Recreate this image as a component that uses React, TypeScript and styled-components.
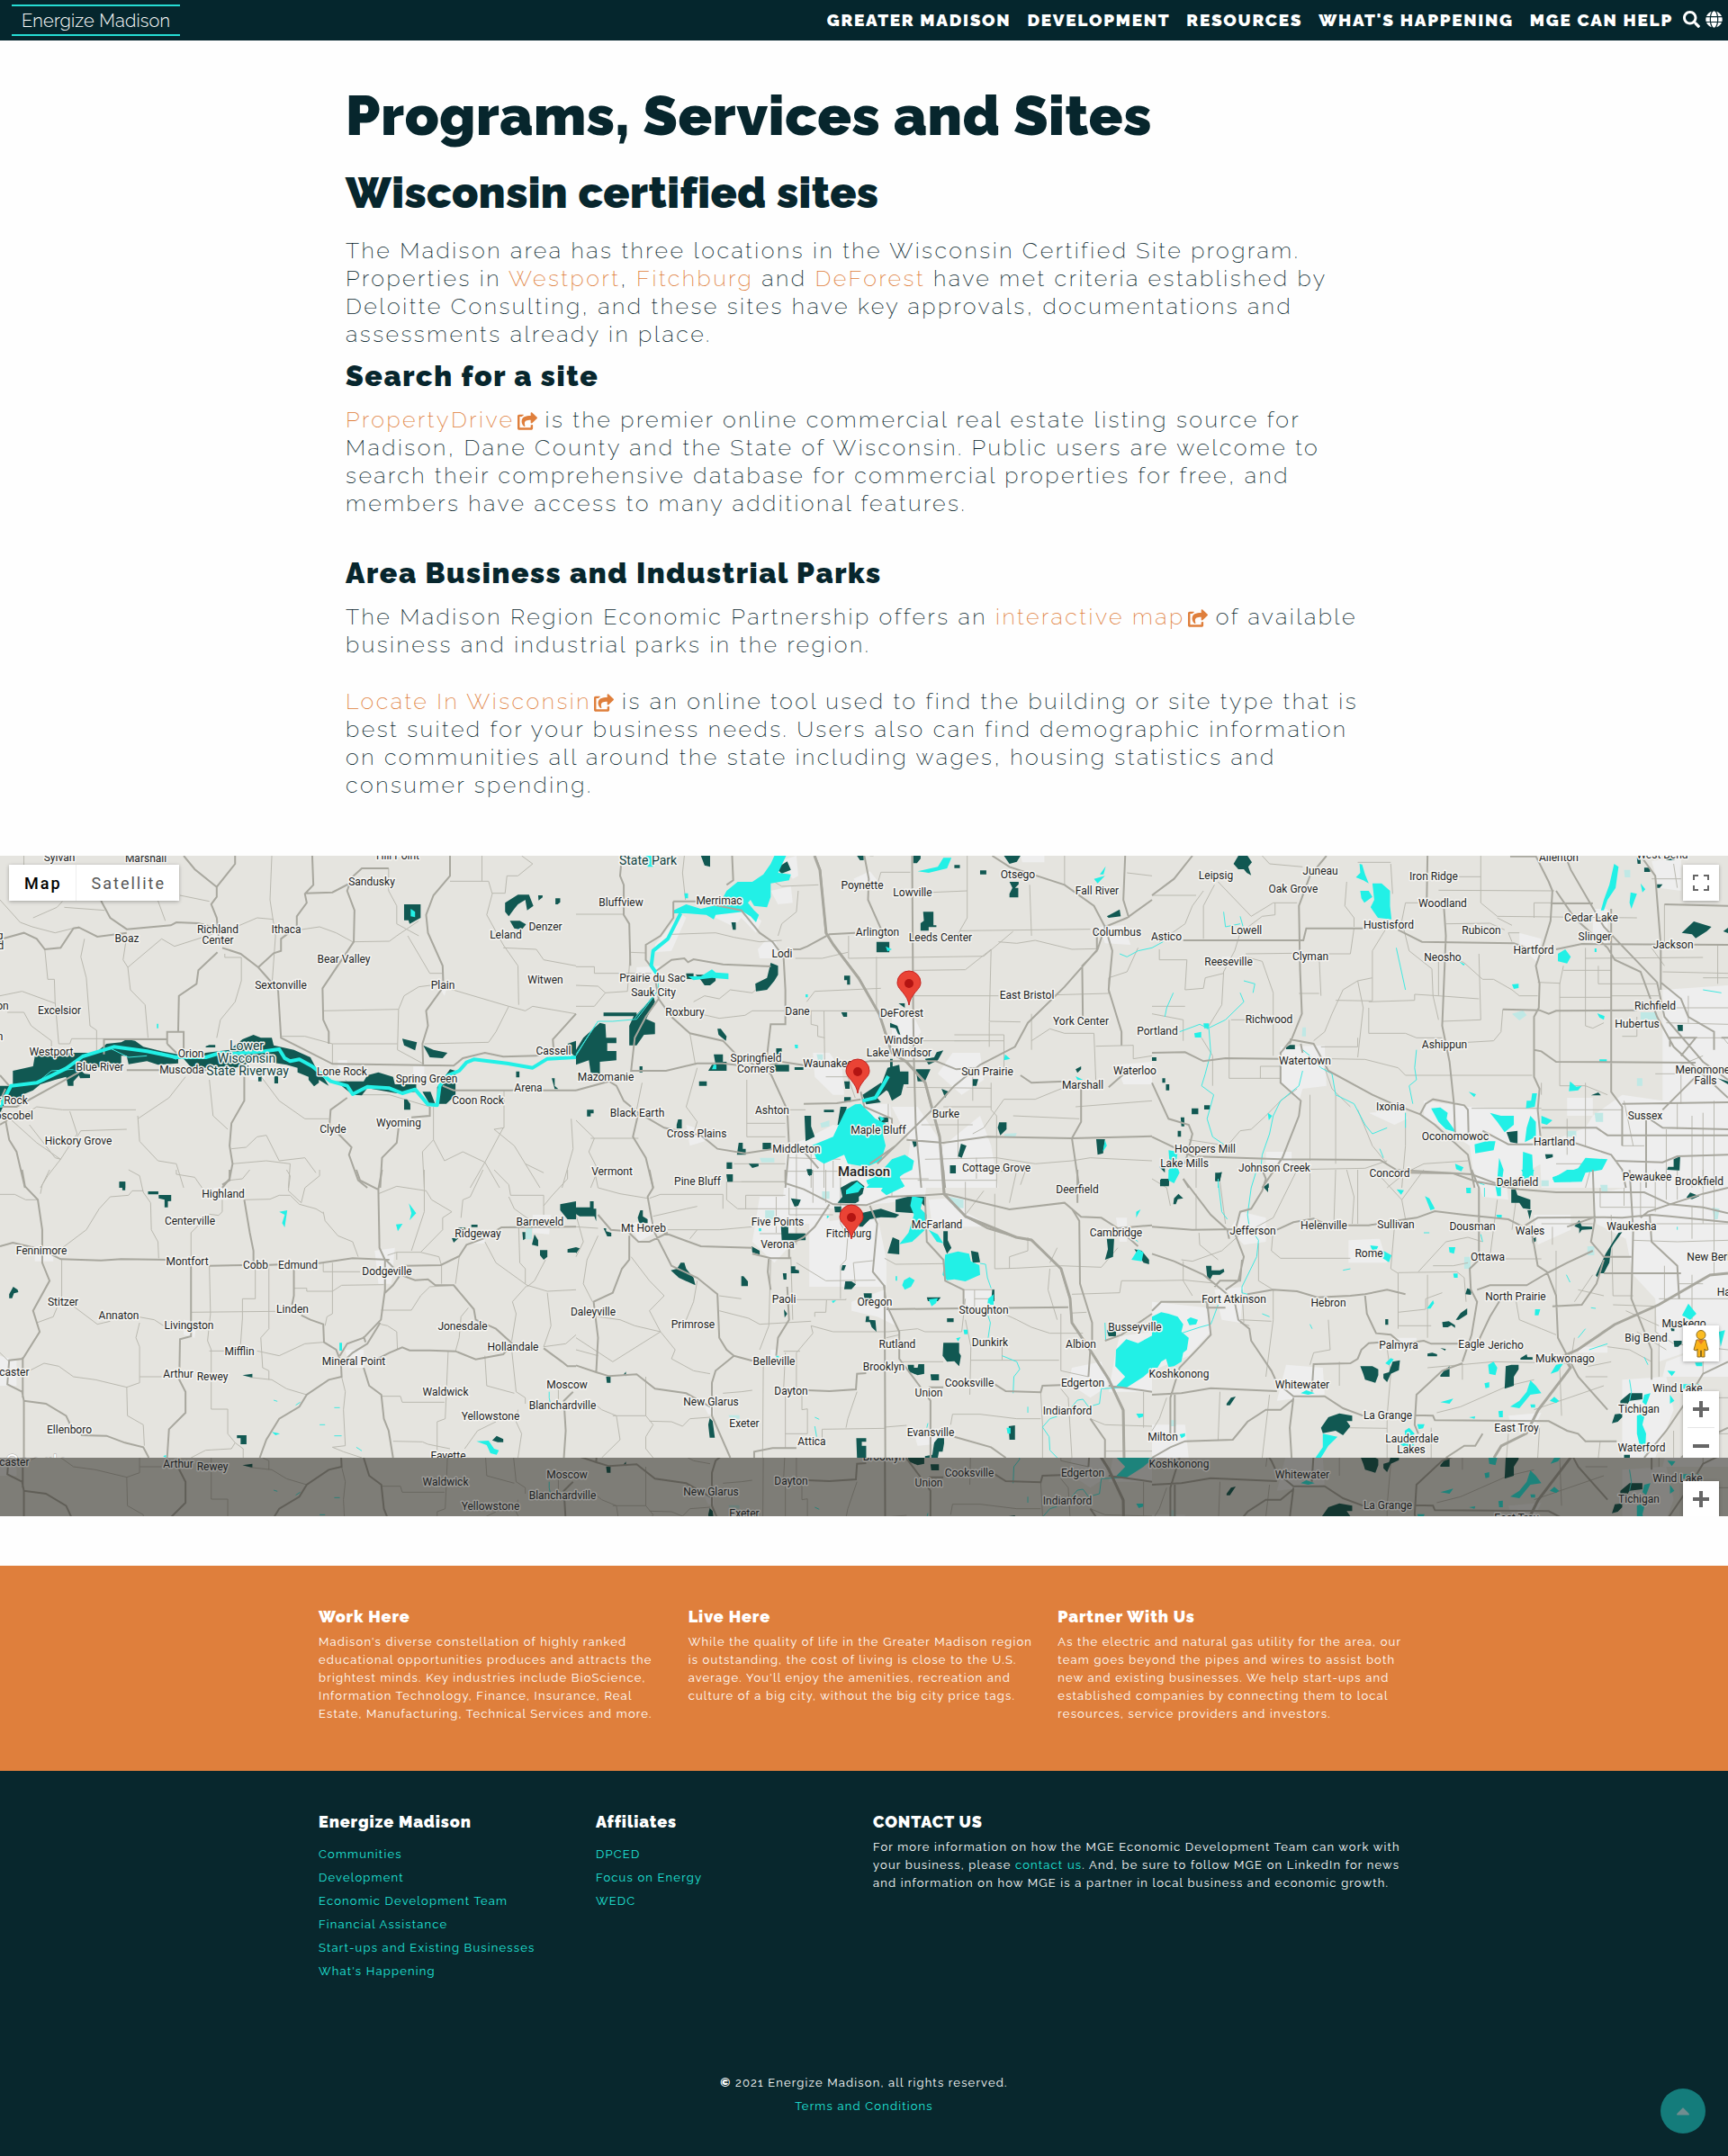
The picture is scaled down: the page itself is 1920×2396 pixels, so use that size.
import React from "react";
import styled, { createGlobalStyle } from "styled-components";
import { FaSearch, FaGlobe, FaShareSquare, FaCaretUp } from "react-icons/fa";

const ink = "#07262d";
const orange = "#df7f3c";
const aqua = "#20e8dc";

const GlobalStyle = createGlobalStyle`
  *, *::before, *::after { box-sizing: border-box; }
  body {
    margin: 0;
    background: #fefefe;
    color: ${ink};
    font-family: Raleway, Lato, "Open Sans", sans-serif;
  }
  h1, h2, h3, p, ul { margin: 0; padding: 0; }
  ul { list-style: none; }
  a { text-decoration: none; }
  button { border: 0; padding: 0; cursor: pointer; }
`;

/* ---------- header ---------- */

const Header = styled.header`
  display: flex;
  justify-content: space-between;
  align-items: center;
  height: 45px;
  padding: 0 6px 0 13px;
  background: #05262d;
`;

const Brand = styled.a`
  display: flex;
  align-items: center;
  height: 35px;
  padding: 0 11px;
  border-top: 2px solid #26ddd4;
  border-bottom: 2px solid #26ddd4;
  color: #fff;
  font-size: 20px;
  font-weight: 300;
  letter-spacing: 0.01em;
`;

const Nav = styled.nav`
  display: flex;
  align-items: center;
  gap: 18px;
  padding-bottom: 2px;
`;

const NavLink = styled.a`
  color: #fff;
  font-size: 19px;
  font-weight: 900;
  letter-spacing: 0.09em;
  line-height: 24px;
  text-transform: uppercase;
`;

const NavTools = styled.div`
  display: flex;
  gap: 6px;
  margin-left: -7px;
`;

const IconButton = styled.button`
  display: flex;
  background: none;
  color: #fff;
  font-size: 19px;
`;

/* ---------- article ---------- */

const Article = styled.main`
  width: 60%;
  margin: 0 auto;
  padding: 47px 0 63px;
`;

const PageTitle = styled.h1`
  font-size: 62px;
  font-weight: 900;
  line-height: 74px;
  letter-spacing: 0.01em;
`;

const SectionTitle = styled.h2`
  margin-top: 19px;
  font-size: 48px;
  font-weight: 900;
  line-height: 58px;
  letter-spacing: 0.01em;
`;

const SubTitle = styled.h3<{ $gap: number }>`
  margin-top: ${(p) => p.$gap}px;
  font-size: 32px;
  font-weight: 900;
  line-height: 38px;
  letter-spacing: 0.05em;
`;

const Paragraph = styled.p<{ $gap: number }>`
  margin-top: ${(p) => p.$gap}px;
  font-size: 25px;
  font-weight: 200;
  line-height: 31px;
  letter-spacing: 0.1em;
`;

const TextLink = styled.a`
  color: ${orange};
  svg {
    width: 22px;
    height: 20px;
    margin: 0 0 0 3px;
    vertical-align: -3px;
  }
`;

/* ---------- map ---------- */

const MapFrame = styled.section<{ $height: number }>`
  position: relative;
  height: ${(p) => p.$height}px;
  overflow: hidden;
  background: #e5e4df;
`;

const MapArt = styled.svg`
  display: block;
  width: 100%;
  height: 100%;
  font-family: Roboto, sans-serif;
  path { vector-effect: non-scaling-stroke; }
`;

const TypeSwitch = styled.div`
  position: absolute;
  top: 10px;
  left: 10px;
  display: flex;
  background: #fff;
  box-shadow: 0 1px 4px rgba(0, 0, 0, 0.3);
`;

const TypeButton = styled.button<{ $active?: boolean }>`
  height: 40px;
  padding: 0 15px 0 17px;
  background: #fff;
  border-left: ${(p) => (p.$active ? "0" : "1px solid #eee")};
  color: ${(p) => (p.$active ? "#000" : "#565656")};
  font-family: Roboto, sans-serif;
  font-size: 18px;
  font-weight: ${(p) => (p.$active ? 500 : 400)};
  letter-spacing: 2px;
`;

const ControlStack = styled.div<{ $top: number }>`
  position: absolute;
  top: ${(p) => p.$top}px;
  right: 10px;
  display: flex;
  flex-direction: column;
  width: 40px;
  background: #fff;
  box-shadow: 0 1px 4px rgba(0, 0, 0, 0.3);
`;

const ControlButton = styled.button`
  display: flex;
  align-items: center;
  justify-content: center;
  height: 40px;
  background: #fff;
`;

const ControlRule = styled.div`
  height: 1px;
  margin: 0 5px;
  background: #e6e6e6;
`;

/* ---------- bands below the map ---------- */

const Band = styled.section`
  margin-top: 55px;
  padding: 46px 0 53px;
  background: ${orange};
  color: #fff;
`;

const Columns = styled.div<{ $template: string }>`
  display: grid;
  grid-template-columns: ${(p) => p.$template};
  max-width: 1232px;
  margin: 0 auto;
`;

const Column = styled.div`
  padding: 0 10px;
`;

const ColumnTitle = styled.h3`
  font-size: 18px;
  font-weight: 900;
  line-height: 22px;
  letter-spacing: 0.05em;
  margin-bottom: 7px;
`;

const SmallText = styled.p`
  font-size: 13px;
  line-height: 20px;
  letter-spacing: 0.09em;
`;

const Footer = styled.footer`
  padding: 46px 0 42px;
  background: #08272d;
  color: #fff;
`;

const FooterList = styled.ul`
  padding-top: 5px;
`;

const FooterItem = styled.li`
  font-size: 13px;
  line-height: 26px;
  letter-spacing: 0.09em;
`;

const FooterLink = styled.a`
  color: ${aqua};
`;

const Legal = styled.div`
  margin-top: 98px;
  text-align: center;
  font-size: 13px;
  line-height: 26px;
  letter-spacing: 0.09em;
`;

const LegalMark = styled.span`
  font-weight: 900;
`;

const BackToTop = styled.button`
  position: fixed;
  right: 25px;
  bottom: 25px;
  display: flex;
  align-items: center;
  justify-content: center;
  width: 50px;
  height: 50px;
  border-radius: 50%;
  background: #147c7b;
  color: #708d90;
  font-size: 24px;
`;

/* ---------- map data ---------- */

type Tile = {
  x: number;
  y: number;
  urban: string;
  pale: string;
  minor: string;
  major: string;
  parks: string;
  lakes: string;
  river: string;
  stream: string;
};

const tiles: Tile[] = [
  {
    x: 0,
    y: 940,
    urban: "M570 290h45v40h-45zM1190 460h30l-10 40zM920 715h25v40h-25zM1125 735h30v40h-30zM680 740h40v40h-40zM230 690h40v40l-30 10z",
    pale: "",
    minor:
      "M65 33V70M0 180L55 255 88 270M90 240L155 205 170 185M88 270L150 290 215 270M175 205L285 215M430 183L450 250M740 33L735 180 750 300 740 470M490 165L570 185M605 290L700 240 745 245M815 280L870 270 915 290 960 320 1060 318 1080 300 1140 250M1058 75V150L1080 200V260L1140 300M1225 118H1330L1340 160 1325 230 1370 330 1410 400 1412 530M1312 33V118M1420 33L1450 60 1410 100 1380 100 1375 158H1340M230 310L220 370 235 440 245 600 263 615V690M345 300L335 380 348 405 355 480 395 530 403 640M348 405L440 310 475 335 590 290M122 345L130 445H148L150 520 160 660H190L195 643M0 500L60 485 150 525M20 555H65L85 600 140 650V670M880 550L1085 545 1082 680 1150 725M765 635L830 635 905 660H1082M905 660V727M1205 470L1385 535 1430 550 1450 535 1568 560M1385 535L1350 620 1330 655 1155 660M1205 425H1170L1110 300M1568 400L1480 380 1460 345 1370 340M1085 545L1100 500 1140 470 1205 460M195 643H455M612 360V372H657V450L640 520 600 580 590 640M1372 815V940L1345 945 1400 1000 1430 1060 1470 1140M860 1090L830 1040 760 1050 725 965 700 970 670 1005 630 1010M370 880H170L100 870 60 900M375 900L380 985 430 1050 480 1060 500 1140M375 910L460 840 505 770M190 885L210 960 165 1045 130 1100 110 1140M80 930L150 1040 165 1045M705 760L760 850 830 910H895M345 945L220 950 200 990M1180 870V980L1150 1020 1155 1140M1180 980L1210 1050 1260 1020 1320 1055 1360 1140M1320 1055L1370 940M1320 1055L1280 1140M940 780L980 830 1060 830 1170 870M570 780L580 900 620 945M1555 910L1560 1010 1530 1140M633 1060L725 1050 790 1060 785 1140M1430 1060L1480 1090M0 880L100 990 165 1045",
    major:
      "M640 33V60L590 137V170L575 195 590 240 595 300M500 33L530 78 590 137M850 33L853 130 830 160 835 190 808 235V270L765 310V350L745 358 703 405M830 158L905 155 960 120M1058 75H985L958 105 945 150 965 215 963 320 878 475 880 580 895 620V660M1225 33V100L1180 165 1160 230 1165 290 1205 400 1207 470 1160 550 1165 600 1150 660 1152 735M0 312L65 290 100 310 122 345 165 340 200 275 215 272 265 303 345 290M275 183L300 240 345 278 465 265 480 255 540 258 592 275M592 355L540 415 535 460 487 500 485 620M605 340L655 360 703 405 757 480 765 640 905 727 1235 733 1260 708 1320 690 1370 703 1460 700 1510 680M1568 560L1505 645 1507 680M0 870H45L215 755M345 748H590M665 770V850L630 925 625 1000 633 1060 625 1110 605 1140M945 840L900 880 897 930 957 1005 950 1030 975 1115 1000 1140M1205 800L1235 815H1568M1170 870V900L1120 905M1085 940L1080 990 1040 1040 1035 1140M15 915L25 980 45 1020 68 1140M0 765L25 800M15 810L0 850M455 660V620H500V710M455 660L480 690M455 645H283V695M0 930L20 915",
    parks:
      "M35 750L90 735 95 700 200 690 260 690 290 660 330 655 345 645 368 650 390 670 440 685 485 695V725L430 730 400 718 350 728 345 700 330 700 330 730 300 728 280 738 210 738 230 760 245 762 245 774 218 775 215 765 200 785V800H185L180 770 150 780 110 795 90 815 60 830 60 842 20 842 0 890V800H35ZM500 710L560 690 625 680 660 645 690 630 710 640 740 640 745 665 800 680 845 705 860 740 880 770 895 800 868 780V790L855 802 840 780 840 770 810 755V740L780 730 700 715 640 740 620 735 560 740 520 738ZM703 770H712V785H703ZM747 768H757V792H747ZM915 785H990L1000 765 1030 755 1070 770 1075 795H1133V820L1080 825 1000 808 985 832 960 830ZM1150 820H1172L1185 862H1170ZM1190 805L1225 745 1240 750 1240 830 1215 860H1190ZM1100 195H1145V240L1115 260 1112 248H1100ZM1375 190L1410 163H1440L1452 200 1435 215 1430 180 1410 195 1400 210 1385 235 1375 220ZM1388 250L1415 250 1432 262 1420 280 1400 275ZM1465 165H1477V172L1466 182ZM1512 175H1525V188L1518 195H1512ZM1095 643L1135 655 1130 682 1100 665ZM1152 665L1180 680 1218 690 1205 708 1170 705ZM1100 845H1108L1117 860V880H1100ZM1405 752H1414V772H1405ZM1502 775H1510V800L1520 811H1510ZM1545 660L1568 650V705L1545 680ZM325 1120H341V1140H325ZM560 668L570 664H586V672H560Z",
    lakes: "M1118 210L1130 220 1130 238 1118 235ZM427 593H431V608H427Z",
    river:
      "M0 870L30 800 100 790 180 742 225 702 270 685 310 670 400 685 480 705 560 705 600 690 640 692 720 685 760 678 775 708 790 718 815 712 850 735 900 785 945 800 960 828 1000 803 1060 808 1095 825 1130 812 1165 862 1190 865 1197 800 1220 765 1250 750 1270 722 1290 712 1380 725 1450 740 1490 710 1568 705",
    stream: "M100 790L140 750 200 745M300 675L350 705 400 700M440 690L480 712",
  },
  {
    x: 640,
    y: 940,
    urban:
      "M530 150L585 135 590 190 550 195ZM380 215L450 205 505 250 490 290 450 240 430 270 380 240ZM215 330L285 225 300 240 260 350 215 355ZM165 405L230 400 215 440 165 425ZM495 345L520 310 545 320 555 375H500ZM755 110L800 85 820 115 790 150ZM555 50L600 33 605 100 590 110ZM645 690L690 690 725 750 730 830 700 830 650 770ZM620 980L700 930 730 940 750 1050 740 1140H570V1000ZM860 870L910 990 900 1070 920 1140H1150L1130 1000 1100 900 1000 1000 930 870ZM1025 690L1100 690 1110 780 1050 830 985 760ZM860 550L920 570 940 620 900 680 860 660ZM1470 730L1568 720V795H1490ZM1425 270L1490 265 1510 330 1440 325ZM780 860L855 860 860 940 800 900ZM1210 33H1275V55H1215ZM300 930L350 950 350 985 310 1000Z",
    pale: "M500 1040H540V1055H505ZM1165 960L1200 958 1195 972H1168ZM655 695H672V720H660ZM665 925L690 915 690 935 668 940Z",
    minor:
      "M295 33L290 90 298 180M0 228H130M148 355L190 357M0 403H50V425L205 425M0 535H50L80 490 140 485 148 355M0 465L60 468 80 490M660 130L560 135 540 120M605 150L600 220 560 260 550 300M260 295L380 290 430 305 500 320 560 315M597 375H670L740 355M742 300V375L1110 368 1190 285M1040 300L1045 283 1400 278M920 415L1060 413 1130 345 1125 585 1210 587M390 575L460 565 480 550H830M390 575L300 550M628 520L650 485 830 475M675 550L677 720M640 550V595L658 600V635L677 640M818 370V550M920 500H1150M1300 497L1450 492 1450 440 1500 420 1530 340M1150 320L1200 325 1250 315 1350 345 1418 343M1125 587V670M1030 630H1165V760M1030 650H1165M920 650H1100M970 155L1065 150V33M1065 150V240L1045 283M1235 130L1240 300M1240 680V560M1240 650L1290 610 1330 625H1410L1415 780M1415 668L1517 665V710L1568 700M820 130L830 88H910M320 520L350 500 390 510 420 480 480 490 535 430M310 625L325 730M575 880H625M465 780V970H570M465 925H570M180 790L165 880M330 740L300 870 330 920 320 960M0 915L50 975 35 1020 60 1080 40 1140M40 975H170M1130 790V880L1145 900V1140M900 805L1130 808M1080 770V850M1375 810L1330 805 1250 845H1165L1110 940 1080 960M950 1045L1145 1040 1250 1060 1350 1050 1400 1040 1568 1050M1230 1060L1210 1130M930 1115H1145M1090 1040V1110M430 1060H570M450 1120H570M600 1000V1140M640 1010V1140M580 1040L720 1045M570 1085H720M700 1050V1140M675 1000V1140M1040 900V1040M1000 870H1130M940 930H1080M1360 870L1568 850M1190 900L1370 910M1330 33V130M1500 90L1568 100M850 860V960M680 770H740L760 840M800 33L810 33",
    major:
      "M650 33L665 80 680 290 700 330 770 440 825 560 860 690 900 720 950 790 990 970 1005 1140M785 33L797 110 795 180 835 290M915 33L918 560 920 720M425 33L428 115 410 130M125 33L120 100 130 130V230L145 260 148 400M265 185H330L450 215 500 290 535 320 565 370 570 480V595H530L520 700M1568 180L1500 240 1440 270 1420 345 1330 470 1230 590 1195 670 1100 730 1030 800 970 880 820 1060M1133 33L1180 70 1330 130 1410 200 1440 270M1495 33L1490 180 1505 240M1440 270L1460 350 1450 480 1485 620V665M1418 280V350L1378 400 1380 600M215 420L260 380 295 375 305 388 320 378 400 395 530 402M215 420L190 380V330L230 300 265 240V185M225 510L260 570 310 625 400 650 440 700 530 760 575 880 580 1000 570 1140M215 440L225 510 190 570 160 640 150 750H245L330 725H400L500 740 560 720 640 735 720 735 800 718H980L1035 745 1090 740M0 815L90 785 110 800 130 850 170 890 240 940 340 965 385 1010 460 1025 540 1010M170 890L155 970 190 1040 210 1140M900 980L1000 990 1120 970 1350 975 1568 968M620 860L710 858 775 845M775 820L785 870 860 910V960M1375 800V920L1350 975 1370 1140M1210 765L1240 790 1330 785M590 345H610L630 335 690 295 760 290M920 720L925 940 940 1140M600 990L660 1075M800 1060L870 1000M1450 805L1510 740",
    parks:
      "M340 33H365V70L350 65ZM545 75L575 52 585 80 560 92ZM765 33H783V48H773ZM1165 33H1210L1200 53 1180 60ZM1180 120H1205V128L1195 140H1204V172H1180V160L1188 140ZM918 33H938V43L928 58H918ZM1100 82H1117V95H1100ZM1030 64H1045V74H1030ZM945 220H973V265H981V271H960V283H938V258L947 250ZM818 320H853V355H818ZM530 390L550 400V430L540 450 520 480 490 485 488 460 520 440ZM730 433H746V463H738V448H730ZM300 425H320V445L300 443ZM325 430H380V450L365 465 350 465 340 448ZM423 255H435V280H427ZM1445 235L1480 212 1483 235 1450 240ZM160 560L215 590V628L185 630 165 665H145V600ZM75 556H165V568H75ZM160 570L190 530 210 500 215 520 190 580ZM20 640L65 590 80 595 82 640H110V658H85V684H110V715L65 720V765L40 755 35 715 0 730V680ZM385 610H394L410 635 408 650 388 630ZM375 695H400V720H410V750H360L370 730H380ZM540 730H580V752H540ZM545 675H560V695H545ZM595 738H619V747H595ZM173 735H181V755H173ZM335 785H356V800H335ZM30 880H48V892H40V902H30ZM278 912H288V942H274V930ZM722 555H738V570H728ZM878 525H895V540ZM855 590L875 600 883 630 877 628 870 608 855 605ZM848 740L880 730 882 752H905V795H892L885 830 860 850 850 820 830 800ZM780 830L830 790 850 810 820 840 830 855 790 862ZM925 745H965L950 785H930ZM950 710L975 705 982 688 1000 682 985 715 960 730ZM995 810L1015 820 1005 840ZM1080 778H1095L1090 800H1080ZM730 785H745V810H733ZM730 838H748V853H730ZM720 870H737L733 900 725 930H712ZM622 900H640V935L650 970 625 985ZM675 880H702V888H675ZM822 905H850V920L830 925ZM443 990H454V1010H462V1030H438ZM508 990H531V1012H508ZM470 1060H497V1068L480 1074ZM410 1055H425V1077H410ZM410 1095H427V1118H412ZM628 1078H642V1098H632ZM1152 922H1172V945L1155 965 1148 940ZM1048 993L1063 1000 1050 1040 1040 1035ZM1416 978H1440L1435 1025 1420 1030ZM915 985H930V998L920 1005ZM1360 745L1375 735 1375 745 1365 757ZM1018 1065H1034V1092H1018ZM855 710H862V740H855Z",
    lakes:
      "M540 33H572L550 90 585 95 580 115 530 125V170L520 205 485 200 475 180 468 190 485 215 498 230 490 255 475 235 455 220 380 230 375 245 355 230 300 225 265 225V215L300 195 340 210 390 195 410 150 440 120 480 120 510 95 530 60ZM305 435L340 435 370 412 380 422 415 425V445L370 440 320 448ZM930 85L985 70 1000 40 1022 40 1010 75 960 90ZM1410 110L1440 100 1420 125ZM1426 95L1442 68 1436 95ZM640 1000L700 970 715 930 735 880 760 862 775 860 800 890 815 910 850 930 835 960 843 1000 830 1050 790 1070 740 1060 730 1030 675 1060 655 1045ZM860 1045L895 1030 920 1050 915 1080 880 1100 890 1140H790L820 1100ZM750 1140L765 1120 785 1140ZM1168 695L1182 710 1165 715ZM1360 768L1380 780H1365ZM1440 980L1445 1000 1434 1020ZM625 495H631V505H625ZM595 663H604V675H597ZM295 158H305V175H297ZM843 335L860 345 848 352ZM190 33H210V70H195ZM375 730H382V745H370ZM825 900L840 910 830 920Z",
    river: "M285 225L250 310 210 350 205 400 222 430M780 850L815 840 835 800 850 768",
    stream: "M222 430L225 480 195 530 165 578 100 585 60 585 35 630 0 700M225 480L160 575M60 585L0 695M1480 360L1500 370 1530 350 1568 340",
  },
  {
    x: 1280,
    y: 940,
    urban:
      "M1390 480L1568 465V1140H1060L1055 1000 1180 940 1200 900 1280 830 1390 850ZM350 670L470 665 475 800 410 810 400 850 350 790ZM740 850L860 870 1050 880 1060 1060 940 1140H880L865 1000 740 900ZM590 890L690 880 695 910 660 930ZM1000 290L1060 310 1050 390 1000 330ZM1360 50L1440 40V150L1380 140ZM1130 840H1200V900H1130ZM190 370H220V400H190ZM1200 210H1240V330H1200ZM310 1020H380V1060H310Z",
    pale: "M980 560L1010 548 1020 565 1000 582ZM1330 555H1375V580H1330ZM1205 890H1228V920H1208ZM410 605H419V635H408ZM1285 80H1302V105H1287ZM1320 775H1335V800H1320ZM1130 950H1155V970H1130Z",
    minor:
      "M300 33L320 60 410 70M0 165H120M170 130L140 200V310M140 150L110 200 90 260 20 320M180 120L270 235 330 190H395M335 230V190M335 230L300 235 240 290 225 350 195 420 190 530 150 610M255 360L390 358M475 360H540L550 275M400 492H455M455 370L460 500M530 120L525 200 550 240V270M725 190H690L680 250 700 350 762 410 765 500 780 580M560 55H650M650 60L655 160M780 148L1095 150M830 103H895M895 33V190L940 235 1320 240M940 240L980 265M800 260L920 258 960 280M1000 290L970 290 980 320M0 535H90M0 560L85 580 85 650M20 345V380H95L90 480 140 475 145 440 195 425M255 370L300 385 330 490V700M500 515L600 517 600 440 560 450 520 480 490 560 470 620 440 650M560 450L575 540 560 705M490 710L580 712 670 740 690 765H1035M715 495L780 500 890 510M590 520L715 515V495M640 270L600 350 600 440M890 360L895 580 790 585M590 540V625L690 625 720 640 790 640M860 655L930 650 950 620 955 545M800 360L850 390 900 445 930 445 980 480 1000 500H1050M1050 455L1110 458V550M1110 460L1120 400M1180 340V600L1200 608 1230 590M1120 415L1250 415M1215 400V460H1375M1180 375L1500 372M1250 500L1380 500M1110 505H1250M1040 190H1200M1040 190V240M215 580H255M210 580V775H350M295 775V735H350M460 670H560V640M240 950L270 945 310 900 350 850 395 810M135 640L165 700V800M240 950L205 1000 100 980M540 870L490 810 470 740M560 880L600 1000 640 1060M360 1080L580 1075 640 1050M690 890V1000L680 1140M1500 890V1140M1530 850V1140M1470 900V1140M1400 945V1140M1430 855V945M1180 790V1000M1060 880H1280M870 875H1060M1400 590L1568 595M1460 500V590M1380 540H1568M1480 640H1568M1370 760H1500M1130 910V1030M1060 830V790M1110 550V800L1180 800 1240 830M1390 420L1568 425M1500 440H1568M1395 195V330M1420 60L1430 140M1360 110H1440M740 1060L690 1090 640 1140M740 1060L860 1050M1280 1000L1340 1000M1200 1050L1180 1140M1100 1060H1180M120 1060V1140M500 830L500 1060M430 830V1050M1500 700L1440 730V860M1285 850L1310 1000M1360 340L1395 400M1320 570V635H1280M1540 330V460M1555 640L1568 660M780 380V500",
    major:
      "M110 33L60 110 0 165M475 33L430 100 400 200 403 410 408 560 375 660M375 645L440 660 480 750 600 830 655 860 730 895 770 930 860 1030 878 1140M405 660L410 690M0 690L90 688 140 718 200 708 350 710M380 645L350 690V790L405 850 400 900 355 1040 300 1140M85 315H412L420 275H575M670 280L735 320 985 325 1030 345M750 33L748 180M795 210L800 300 790 600 810 720 822 860 825 960M975 35H1045L1080 120 1090 150 1085 250 1065 330 1045 400 1055 460 1053 540 1040 570V770L1055 810 1050 880 1060 1000M1125 33L1140 80 1230 270 1375 455 1395 570 1500 720 1568 780M1100 150L1150 240 1240 340 1260 380 1330 420 1375 570 1420 670 1568 840M1330 33L1370 100 1385 330 1385 480M1100 345L1170 327 1568 330M955 545L1055 548 1080 560 1100 550 1320 548M1040 680L1060 685 1100 720 1480 723M1385 455L1440 510 1460 570 1530 620V680M1410 670V640L1480 640 1440 700M0 970L110 1035 350 1045 620 1047 665 1080 870 1095 935 1125M730 895L745 860 765 845 850 865 860 880 862 975M900 950L970 995 1050 995 1150 990 1250 1030 1280 1080 1290 1140M1250 210V820L1280 870V1000M1060 940H1210L1240 965H1568M1280 860L1568 855M1330 890L1390 940 1568 945M1260 1050L1390 1055 1430 1035 1568 1030M1345 915V1140M1390 880L1480 770M0 790L45 910 100 930 110 960 90 1060M85 1110L100 1140M1085 192H1200M1395 195L1568 200M1550 640L1568 640",
    parks:
      "M222 60L235 33H260L272 55 262 70 270 98 258 90 250 78H235ZM1442 290L1475 252 1523 270 1510 285 1480 308 1470 295ZM1555 285L1568 273V291ZM1340 73H1356V87H1340ZM1320 40H1330V60H1322ZM1375 128H1390L1382 140H1375ZM1430 597H1445V617H1432ZM365 672L375 664H389V678H365ZM108 875H126V895H108ZM142 865H158V879H142ZM28 775H36V790H28ZM38 795H47V815H38ZM78 905H88V935H80ZM70 950H79V970H70ZM0 705H12V717H0ZM965 955L995 950V992L975 988ZM1070 1028H1091V1038L1073 1044ZM1420 1045L1438 1035 1436 1082 1402 1080 1405 1070 1420 1070ZM1195 832L1215 822 1222 832ZM175 1095L190 1087 185 1118 172 1115ZM22 1113H46V1135H22ZM20 1070H35V1090ZM1400 40H1422V48H1400ZM300 1140L318 1125V1140ZM1540 775L1568 785V795Z",
    lakes:
      "M565 60L572 62 580 95 590 125 575 115 555 105 567 90ZM600 125L625 125 648 150V200L652 245 615 240 595 205 605 180ZM567 150L590 150 600 170 578 190 570 175ZM1258 60L1270 70 1262 140 1240 180 1230 215H1222L1230 180 1245 130ZM1303 155L1320 160 1305 210 1300 190ZM1330 125L1343 145 1335 155ZM1105 360L1125 345 1140 370 1130 392 1105 385ZM980 462L998 460V474L985 477ZM1212 558L1232 568 1230 580 1218 572ZM1218 712H1238V720H1218ZM835 385L852 395 848 399ZM1138 785L1155 803 1170 800 1160 815 1135 818ZM760 875L785 872 805 890 802 910 828 955 800 945 780 920ZM920 890L950 900 985 900V930L960 955 940 920ZM1035 825H1048L1042 870 1018 875 1020 850H1032ZM1030 900L1045 920 1045 970 1015 988 1020 940ZM1060 900L1090 915 1075 930 1060 925ZM878 995L910 985 935 985 930 1015 880 1025ZM1010 1020L1035 1030 1038 1100 1008 1112ZM1090 1105L1160 1075 1180 1040 1240 1045 1225 1080 1180 1090 1170 1120 1095 1122ZM825 1060L848 1072 842 1085 828 1078ZM945 1040L957 1080 950 1140 940 1110ZM45 1015L70 1020 65 1060 75 1090 60 1125 45 1115 48 1060ZM115 625L134 620V639H117ZM140 592H155V608H142ZM315 890L327 900 318 915ZM862 820L882 828 877 838ZM1205 342H1210V354H1205Z",
    river: "",
    stream:
      "M75 620L130 595 155 610 160 690 145 760 135 800 168 830 150 910 165 970 195 995M58 490L40 540 35 570M150 610L200 580 250 520 240 490M250 450L280 460 275 490M410 680L430 700 460 740 490 760 500 830 550 860 580 930 600 960 640 940M410 750L400 800 350 850 330 900 320 960 300 1030 295 1090M195 220L200 270 240 260M240 235L255 300M0 340L30 320M720 680L715 740 720 780 700 800 710 860M665 340L690 480M690 890L690 940M180 1110V1140M1500 480L1550 490M620 1010L630 1040",
  },
  {
    x: 0,
    y: 1300,
    urban:
      "M95 255H145V305H95ZM0 620L45 635V720H0ZM1020 270L1075 260 1065 380 1030 380ZM1450 150L1500 150 1495 215 1450 210ZM500 500L535 505 530 560 500 550ZM940 600H990V660H950ZM580 60H620V100H590ZM1285 220H1320V245H1285Z",
    pale: "M1432 195H1448V232H1430Z",
    minor:
      "M0 82H40L70 100H103M110 80L115 50 135 0M170 260L235 200 270 130 300 90 350 85 360 70H390M350 0L380 20 390 75 410 110 412 200 430 240 432 295M480 0V15L530 25 550 60M605 100V140L595 152 570 148 520 210V290M625 35L660 30 680 0M665 100L735 98 760 85 790 85 815 115 860 130 880 145M780 0L790 20 785 70 820 110 830 60 870 20V0M880 140L885 170 920 220 960 240 975 290M1030 80L1080 55 1160 70 1175 100 1230 140M1155 0V140L1120 270M1055 285L1080 275H1145L1195 290 1202 320V380M1080 275V300M1230 140L1205 160V200L1145 275M1315 0L1280 90 1260 100 1255 160M1345 0L1385 50 1390 85 1480 85 1480 150M1545 0V30L1500 90 1480 120M1385 90L1400 130 1440 165M1320 240L1350 310 1435 385 1490 405 1568 400M1250 290L1240 380M1435 385L1395 440 1405 480 1393 570M1485 300L1455 370 1435 390M1490 410L1500 520 1480 590M1412 190L1415 310 1430 330V380M1480 590L1540 580 1568 550M168 300V425M200 455L265 515 300 505M375 490L420 500 445 520M100 510L145 490 155 460M380 510L370 560 380 590V710L345 725M380 690H440M80 670L120 645 160 655 200 690 260 700 345 725 347 820 390 850 393 920M570 320L573 480 565 570 575 600V798H620L620 880 640 910M520 475L750 472M695 320V430H660V495L655 580 645 600M732 320V530L710 560 715 660 732 670V700M680 692L740 700 780 730 835 750M570 604H610M700 604L760 620 830 580 880 575M800 395H835V405H905L930 385 1045 383M880 310V340H980M905 310V480L890 490 885 520M1037 468H1120L1145 420 1170 390 1235 385M1037 515L1055 520 1080 540 1082 600M1275 460L1255 490 1250 560 1240 605M1220 605L1212 830 1190 840V910M1040 755L1090 755 1095 775H1210M1070 905L1150 907 1165 915 1225 930M1320 620L1325 720 1400 745M1393 600L1405 740 1430 760 1430 780M930 690L940 740 935 800 940 920 905 925M905 925L935 940 985 960M520 960L560 935 630 930 640 910 662 930V960M1350 840L1300 870 1265 930M1410 800L1405 840 1420 880 1410 960M1520 720V770M0 610L25 640M1190 960V910",
    major:
      "M60 0L68 55 103 100 115 200 115 310 135 370 90 470 108 540 62 630 25 635 20 715 60 740 65 770 65 960M62 625V760M65 770L125 780 180 820 195 860M0 255L35 243 113 265 165 298 275 302 330 298 460 300M570 320L660 318M720 318L760 316M865 312L960 295 1060 300M625 0V35L605 50M970 0L980 35 1028 65M1040 0L1030 65 1033 260 1048 300 1048 400 1037 500 990 560 945 580 925 620M665 100L680 210 690 270V310M520 320V555L490 565 488 700 505 740V810L460 865 455 960M1050 300L1090 350 1130 368 1165 365 1185 385 1235 385 1290 465 1295 500 1350 530 1395 580M1048 410L1070 385 1090 350M1100 320L1200 318 1250 288 1270 250 1315 230 1365 192 1568 190M800 330V420L795 450M820 485L845 500 880 515 882 575 915 600 928 640 930 690 895 700 835 750 815 790 760 830 725 900 707 960M1035 510L1000 580 960 610 925 650M1020 635L1060 610 1095 592 1115 602 1170 602 1240 605 1295 632 1370 615 1395 580M1480 595L1530 640 1545 655 1568 655M990 555L995 575M990 660L1005 720 1038 750 1045 830 1058 870 1070 960M220 885L290 887 340 910 390 925 405 960M1560 740L1535 770 1540 870 1535 960",
    parks:
      "M325 40H341V68H333V60H325ZM403 72H431V82H403ZM432 84H466V104L457 105V125H448V100L432 95ZM1525 115L1568 105V165L1545 165 1525 135ZM1283 183H1300V191H1283ZM1247 193H1267V200H1250ZM1230 228H1248L1235 243ZM1455 215L1465 235V255L1448 250ZM1422 208H1430V230L1424 235ZM1470 268H1490V290L1480 300 1470 285ZM1545 265L1568 258V276H1545ZM36 390L48 400 50 408 38 412 33 428H25V415ZM660 685L687 680V692L676 690ZM645 885H671V915H655V895H645ZM1340 902L1352 887 1370 898V908L1355 908Z",
    lakes:
      "M760 140L782 135 775 192 768 178 775 150ZM1113 112L1133 145 1115 168 1120 145ZM1078 182L1096 180 1083 205ZM924 577H931V603H924ZM740 874L762 880 750 885ZM1297 905L1330 903 1345 930 1358 935 1352 950 1335 945 1325 918ZM444 955L452 951V960Z",
    river: "",
    stream: "M805 785L817 775M970 925L985 937M745 768L755 772M910 793H925M870 850H885M910 887H930M1495 740V760L1500 790",
  },
  {
    x: 640,
    y: 1300,
    urban:
      "M635 180L820 150 845 300V390H635ZM570 0H960L950 90 850 110 690 130V180L600 180 560 150ZM500 90L570 90 600 230 540 310 480 240ZM960 100L1060 90 1060 140 1130 190H970ZM1055 400H1140V455H1055ZM150 180L200 160 230 200 170 240ZM750 440L840 400 870 520 820 490 750 470ZM1350 660L1430 640 1450 720 1400 760 1340 710ZM920 880L985 870 975 915 930 920ZM1470 600L1480 555 1568 540V740H1450ZM1470 160H1500V240H1480ZM530 600H550V640H530ZM345 780H375V815H360Z",
    pale: "M1015 90L1055 100 1055 128 1030 125ZM515 135H540V165H515ZM670 72H690V97H670ZM415 818H445V830H420Z",
    minor:
      "M410 40H570M410 40V100L440 130H690M462 85H570M462 85V130M195 95L120 80 60 60 50 0M200 95L230 82H400V130M210 155L300 130 330 122M250 200H390L480 190M0 190L60 195M330 200L310 230M45 440L20 380 30 300 60 220M0 290L20 240 0 150M150 290L200 370 240 420 200 470 230 540 270 600 260 630 320 670 365 680M330 370L320 440 300 500M60 490L120 500 160 520 230 540M0 560L100 640 230 540M390 470L470 495 500 515 640 505M600 310L680 370 815 368M585 290L590 500M600 433H735V430M650 490V475H680L682 435M640 520L700 540 850 540 930 530 950 540H1050L1060 430M640 520L645 545 600 610V735M840 295L870 315 1000 313M760 380L755 310 808 303M720 0V180L740 220 735 300 720 320V430M645 0V110M680 0V110M580 60V150H700M600 60V250M500 213H620M545 90V210M1140 80V330L1200 328 1320 320 1430 325 1475 260M1180 330V290L1230 270V225M1290 330L1285 400 1310 500M1310 260L1290 310M1350 415L1480 410 1485 370 1568 370M1345 478L1390 475M1320 480V670L1395 690M1130 480L1165 480 1200 500 1240 525 1290 545 1380 545M1060 500L1075 590 1072 750M1075 635H1315M1160 580V635M1055 400H1140M1085 430H1140M1085 400V460M565 605H610M570 610L565 735M510 640L508 960M570 750V930M615 735V800L630 797V880H570M480 735L450 740 400 745M100 820H190M190 690V820L210 850 190 890V930L210 960M50 780L70 800 110 820 120 900 70 960M200 838L260 840 290 855 310 830 365 825M765 740L740 830 735 860M670 865L840 862M840 858L900 852M670 865V900M1020 850L1025 815 1100 815 1200 830 1265 830M1265 740L1270 850V960M1320 730L1340 760 1350 960M1400 830L1440 850 1568 855M1440 938H1568M1545 740V860M1060 150L1110 70M1060 40V160M530 300L525 520 500 600M390 420L450 430M0 600L60 620M860 30H960M860 0V90M890 640L1000 640M845 560L880 550M1180 110L1200 0M1060 5H1180",
    major:
      "M570 0V45L620 65 700 115 790 118 850 90 950 85 1005 80 1180 132 1330 110 1375 157 1430 160 1475 195 1568 185M1000 0L1003 80 1060 155 1120 195 1200 225 1240 235 1320 330 1345 430 1350 510 1400 600 1450 700 1490 800 1492 960M800 120L820 180 808 340 838 385 845 450 880 540V630L935 720 965 770V960M145 220V300L125 330 100 410 48 440 60 560 55 675M200 0L210 60 195 90 210 190M60 150L95 200 140 205 170 240 200 240 250 210 M210 200L260 320 330 360 385 415 390 560 410 600 430 620 380 670 370 710 370 820 420 960M240 210L340 255 480 260M480 280L530 295H585M690 115L650 190 620 225 580 250V298M525 295L522 340 530 400M575 390L580 500 550 560 545 620M430 620L480 637M845 465L1050 462 1340 458M950 90L955 240 1000 300 1005 370 1055 400V460M1350 130L1370 170 1372 380 1405 510V570M1400 600L1395 690M0 652L55 675 90 688 165 682 215 730 300 745 365 790M630 735L690 738 762 732 765 680 790 678M840 385L842 960M960 725H1000M1140 715L1170 738 1265 742 1270 720 1320 718M1450 720L1568 740M1400 830L1440 900V960M1030 890L1130 925 1170 960M485 960V940L535 928H600M1365 0V110M1530 255L1475 195M1440 570L1485 550 1568 480",
    parks:
      "M0 125L38 125V105H48V130H55V172L50 155H10L0 148ZM175 135H182V155L195 165V178H172L168 160ZM75 195H82V205L96 210V222H85ZM258 335L275 330 285 310H295L300 330 320 360 325 385 280 360ZM0 258L10 262 0 280ZM450 355H456L468 372V388H450ZM720 60L750 40 765 35 785 55 780 80 770 90 770 105 760 112 712 110 725 90ZM703 122H722V142H705ZM585 95L612 100 605 120 595 123ZM870 100L910 88 952 90V125L940 110 920 130 920 145 870 140ZM775 145L830 130 880 150 870 160 830 158 800 165 780 190H770ZM558 190H578V212H625V235H560ZM478 255L500 270V283L480 275ZM585 322H597V332L607 335V345H585ZM563 345H573V366H565ZM725 318H735L730 335H722ZM733 372H750L762 382 750 398H730ZM783 412H805V430H785ZM790 488H798V500L815 502 818 540 805 525 800 508H788ZM862 225L880 235V282L848 278ZM1000 205H1012L1012 235 1022 260 1010 280 1000 250ZM1075 270L1095 275 1100 308 1080 310ZM1445 230H1465L1462 290 1440 300 1448 265ZM1520 265L1540 270 1560 300 1560 315 1545 310ZM1133 400H1139V437L1130 445ZM955 425H993L985 438H958ZM1010 495H1028V508H1010ZM1000 577H1043V610L1048 620 1043 655 1030 638 1010 640 998 620ZM903 650H920V660H930L932 648H948V680L930 685 905 672ZM965 682H988V702H967ZM364 828L372 838 378 893H364L360 850ZM1178 855L1195 852V900H1180ZM763 895H790V907H778V920H790V960H765ZM985 895H1002V912L998 940H988L985 960H950V955L970 950 975 910ZM410 15H426V40H412ZM566 465L575 480 568 493ZM82 690H94V710H84ZM1445 535H1470V555H1450ZM628 0H643V12L636 22ZM128 685L136 673V688Z",
    lakes:
      "M735 68L765 40 780 55 768 75 735 82ZM790 35L812 25 820 0H905L880 25 895 55 870 70 845 85 830 70 840 50 820 35 795 50ZM915 88L945 95 938 130 955 150 950 200 915 240 880 248 905 210 920 150 910 120ZM1005 283L1040 272 1070 280 1075 305 1098 318 1100 350 1060 372 1030 365 1010 368 998 350 1002 320ZM960 200L985 215 1000 245 982 240ZM893 368L908 358 922 368 912 390 895 400 888 385ZM960 432L985 428 980 445 968 455ZM1470 600L1498 565 1530 578 1568 553V665L1545 690 1500 725 1465 728 1495 690 1468 655ZM1055 533H1066V548H1057ZM1122 430L1137 415V450H1120ZM1525 140L1537 132 1525 160ZM1512 300L1530 265 1545 275 1540 305ZM1172 860H1183V880H1175ZM1525 813H1544V823L1532 828ZM870 355H874V370H870ZM498 195H504V205H498ZM696 437L708 435 700 445ZM545 620H552V626H545ZM1035 562L1047 558 1040 572ZM683 152L690 155 683 163Z",
    river: "",
    stream:
      "M1100 312L1115 315 1120 360 1130 395M1120 480L1128 510 1122 560M1160 620L1200 640 1208 665 1192 690 1190 745M1500 725L1430 730 1425 780 1395 790 1380 765 1365 768 1350 790M1310 822L1290 830 1270 858 1288 890 1290 935 1310 960M1230 790V810M650 825L662 832M650 855L655 890M958 845L955 860M1440 510L1442 570M1500 210L1530 240",
  },
  {
    x: 1280,
    y: 1300,
    urban:
      "M1200 80L1568 0V560L1380 640 1370 430 1310 350 1290 230 1210 180ZM1280 700L1400 690 1420 800 1370 960H1280ZM1400 640L1568 560V690H1390ZM880 0H960L970 100 900 90ZM245 140L310 160V240L250 250 210 200ZM535 235L620 230 640 310 535 310ZM170 400L250 390 240 510 190 500ZM365 650L465 660 470 750 340 770ZM970 820L1060 810 1040 860 980 860ZM0 440L150 460 160 540 100 620 0 670ZM1040 150H1140V200L1050 250ZM660 560H720V600H670ZM1160 590H1240V610H1160ZM0 850H90L100 960H0Z",
    pale: "M850 290H867V330H850ZM1185 255H1204V285H1186ZM1525 125L1545 130 1540 165H1530ZM1220 50H1240V75H1225ZM50 835H65V855H50ZM1060 35H1080V55H1060Z",
    minor:
      "M120 80V200M128 210L130 250 180 300M430 0V160M395 0L330 160 270 200M560 0V180M330 200L325 270 350 295H540M85 305V370L110 420M0 370L90 368 170 378M245 210L190 270 110 305 80 300M500 0L495 185M530 0L550 90 545 180M660 190L650 330 670 345V530M620 20L650 60 680 100 690 165M680 100L740 0M725 340L800 240 860 225 900 240M670 343L830 340 850 360 855 440M765 320H820L860 310M670 475L745 465V430L790 410M750 350V560M670 520H760M960 297H1060M990 430L1000 500 1060 530 1100 550M290 245V370L330 400V500L310 690M480 500L485 600 440 610 430 650M240 500L325 505M245 400L250 510M750 660L930 640 1140 645M775 810L840 790 970 720 1040 700M845 645V700M1120 630L1190 655 1250 640M1250 150L1255 420H1310M1255 450L1370 455V540L1420 580 1568 600M1220 60V125H1370M1285 60V120M1330 40V150M1370 0V140M1400 0V100M1430 0V100M1470 120V230M1500 0V180M1530 0V350M1360 180H1568M1310 235L1430 240 1568 235M1435 380H1500M1380 430H1568M1470 350V500M1395 320V440M1380 560V690M1500 580V680M530 860L640 862M640 595L650 680 640 820V960M760 860V960M1055 860L1050 960M320 750L300 960M185 740L180 900M40 760L20 830 0 870M1150 560L1140 640M1180 690H1240M1420 870V960M1470 760H1568M1500 880H1568M1200 350L1150 440M1240 590L1300 600 1360 640M970 880L965 960M1215 960L1220 905M990 110L980 200M940 100L920 290M1060 180H1200M1090 190V250M1100 270V420M0 30L40 60 50 120M185 40L200 180M240 510L265 520M1040 800L1230 720M1110 660L1115 820M1290 470L1380 520M1320 540L1400 600M1160 400L1230 420M510 640V720",
    major:
      "M85 30L160 150 205 200 210 230 M0 190L110 200 225 198M340 200L385 175 440 163 480 185 590 185 690 165 720 160 770 138 850 150 970 165 1010 190 1050 160 1230 158 1280 160 1360 150 1410 155 1568 175M700 10L820 12 880 38 1000 65 1100 75 1270 75 1340 75 1410 115 1500 125 1568 145M1410 115L1350 140 1330 160M1410 115L1500 80 1568 60M300 0L310 30 300 70 270 130 240 140 225 210 250 290 235 370 200 400M225 440L235 500 265 530 270 570 325 670 340 710 385 755 470 755 520 795 575 820M0 280L60 305 140 350 175 385 210 420M260 415L330 400 395 405 450 425 540 420 580 415 640 400 690 415M580 420L585 480 610 545 650 550 680 580 740 570 760 580 840 580M435 740L440 648 540 645 560 630 570 600 590 578 620 575M0 750L80 745 160 728 340 738M385 760L375 860 380 960M385 765L350 800 310 800 260 840 220 900 90 905 50 925 0 960M150 440L160 550 130 590 75 660 50 760V900M62 750V900M870 0L890 60V300L865 330 868 400 885 440 870 550 845 640M845 645L790 670 720 750 715 850 725 880M715 818L765 820 770 835 1080 838 1130 870 1160 880 1180 905H1265M1030 190L1040 250 1050 320 1075 340 1100 420 1105 560 1160 690 1240 800M1200 0L1205 170 1195 240 1230 290H1305M1310 200L1305 430 1360 600V700M1355 150L1360 240 1430 320 1435 430M1230 345H1440M1075 345L1130 310 1200 270M885 400L920 385 1020 385 1075 345M950 430L920 490 885 580M1230 300L1210 380 1170 450 1090 455M1568 640L1500 680 1450 780 1400 870 1340 960M1568 860L1500 900 1440 960M150 440L100 440 25 440 0 470M150 440V460L200 460M170 390L185 370H240L245 300M800 960L850 920 880 920 900 880M1300 0L1310 200M1130 190L1205 158",
    parks:
      "M24 30H46V52H24ZM60 95L72 80 85 95 70 98 65 115H58ZM172 10H190L184 38H172ZM305 60L316 45V75ZM147 320H162V335H185L195 330 197 340 185 350H165L158 367 150 355ZM978 65H990L995 85 1030 100V132L1010 128 1000 110H978ZM1022 135H1034L1028 165ZM1150 188L1163 168 1170 188 1198 190V198L1170 200 1163 212V195ZM1455 92L1465 76 1490 88 1470 98ZM1270 210L1280 208 1258 245 1250 260 1245 310 1230 345 1218 345 1212 358 1208 352 1235 280ZM1035 230L1045 225 1045 238 1036 245ZM858 395L870 400 868 417 853 415ZM858 462V482L835 500H827L840 478ZM790 508L808 505 825 518V527L815 518 805 525H792ZM635 498H643V517H635ZM750 613L763 610 776 615V622H750ZM785 594L800 598 798 603ZM567 655L600 655 616 665V685L608 710 580 700 575 680ZM655 640L675 635 672 668 650 680 640 708 630 695V680L645 675ZM785 685L795 670 810 655V690H785ZM963 655L978 650 998 650V665L985 690 985 720 960 730ZM1003 628L1020 615 1022 625H1036V633H1003ZM203 780L215 760 228 756 212 785H203ZM460 860L480 825 510 812 545 820V838H530L540 855 520 885 500 870 465 878ZM1275 770L1300 745 1335 745V765L1300 770 1290 790H1275ZM1252 845L1260 815 1280 812V825L1268 840ZM1420 570H1442V580L1432 590H1422ZM1285 950H1301V960H1285ZM1412 528H1422V538H1414Z",
    lakes:
      "M0 490L25 475 45 480 70 490 85 515 80 540 100 560 95 600 85 610 80 640 60 655 45 658 38 630 25 640 15 660 0 660ZM95 500L105 492 125 500 120 515 102 518ZM45 0H72L60 35 45 30ZM1005 0H1040L1035 25 1015 20ZM1090 30L1130 0H1180L1172 30 1140 40 1095 38ZM666 65L686 68 678 83ZM743 88L755 95 770 130 758 135ZM808 258H826L822 280 810 275ZM630 270L652 285 645 308 628 295ZM594 252L616 255 612 265 600 270ZM820 346H832V360H822ZM765 435L768 445 758 463H748ZM1043 465H1057L1052 485H1042ZM1460 446L1482 480 1465 500 1443 485ZM1543 540L1560 535 1548 590ZM635 645L650 628 658 632 645 652ZM915 650L930 640 940 660 935 685 918 680ZM1085 680L1100 650 1120 645 1105 672ZM905 712L918 708 918 725 908 728ZM1030 702L1045 720 1060 745 1030 750 1000 795 975 790 1000 770 1020 740ZM1083 770L1095 757 1108 770 1100 778ZM785 775L820 763 810 780ZM722 848L742 848 738 862 726 865ZM688 870L700 860 715 880 700 895 715 920 690 925 675 915 690 905ZM863 825L880 822 878 830ZM943 805L955 803V825H945ZM1478 643H1498V655H1482ZM1403 670L1425 672 1415 688ZM1440 715H1490V730H1440ZM1340 750L1357 745 1345 785 1335 775ZM1410 750L1422 770 1410 780ZM1320 820L1343 810 1335 850 1345 880 1342 945 1330 930 1320 880ZM465 880L505 890 480 920 460 960H445L465 925ZM405 745L420 735 443 745 425 750ZM75 882L90 878V888L80 895ZM1030 782H1043V793H1032ZM855 60H868V78H856ZM935 55H950V88H940ZM937 150H952V160H940ZM405 668L410 680Z",
    river: "",
    stream:
      "M180 40L190 140 205 165M285 0L270 60 260 150 265 190 290 235 285 290 245 390 245 410 M245 410L260 415M180 450L165 500 160 515 130 525 80 545M1300 700L1305 740 1300 770M1160 560L1180 530M1190 600L1240 580M1340 625L1350 650M1128 350L1138 375M1195 460L1208 462M520 335L540 330M740 210H755M300 480L320 490M430 515L436 530M880 40L905 50M905 60V90M895 215L900 240M1430 190V200",
  },
];

type Place = [string, number, number];

const places: Place[] = [
  ["Sylvan", 66, 953], ["Marshall", 162, 954], ["Hill Point", 442, 951], ["Sandusky", 413, 980],
  ["Denzer", 606, 1030], ["Leland", 562, 1039], ["Richland", 242, 1033], ["Center", 242, 1045],
  ["Ithaca", 318, 1033], ["Boaz", 141, 1043], ["Bear Valley", 382, 1066], ["Sextonville", 312, 1095],
  ["Plain", 492, 1095], ["Witwen", 606, 1089], ["Excelsior", 66, 1123], ["on", 3, 1118],
  ["g", 0, 1040], ["d", 1, 1051], ["n", 0, 1152], ["Westport", 57, 1169], ["Blue River", 111, 1186],
  ["Orion", 212, 1171], ["Muscoda", 202, 1189], ["Lone Rock", 380, 1191], ["Spring Green", 474, 1199],
  ["Arena", 587, 1209], ["Coon Rock", 531, 1223], ["Wyoming", 443, 1248], ["Cassell", 615, 1168],
  ["Clyde", 370, 1255], ["Hickory Grove", 87, 1268], ["r Rock", 14, 1223], ["Boscobel", 12, 1240],
  ["Poynette", 958, 984], ["Lowville", 1014, 992], ["Otsego", 1131, 972], ["Fall River", 1219, 990],
  ["Bluffview", 690, 1003], ["Merrimac", 799, 1001], ["Arlington", 975, 1036], ["Leeds Center", 1045, 1042],
  ["Columbus", 1241, 1036], ["Lodi", 869, 1060], ["Prairie du Sac", 725, 1087], ["Sauk City", 726, 1103],
  ["Roxbury", 761, 1125], ["Dane", 886, 1124], ["DeForest", 1002, 1126], ["East Bristol", 1141, 1106],
  ["York Center", 1201, 1135], ["Portland", 1286, 1146], ["Windsor", 1004, 1156], ["Lake Windsor", 999, 1170],
  ["Springfield", 840, 1176], ["Corners", 840, 1188], ["Waunakee", 920, 1182], ["Sun Prairie", 1097, 1191],
  ["Waterloo", 1261, 1190], ["Marshall", 1203, 1206], ["Mazomanie", 673, 1197], ["Black Earth", 708, 1237],
  ["Ashton", 858, 1234], ["Burke", 1051, 1238], ["Cross Plains", 774, 1260], ["Maple Bluff", 976, 1256],
  ["Middleton", 885, 1277], ["Vermont", 680, 1302], ["Cottage Grove", 1107, 1298], ["Pine Bluff", 775, 1313],
  ["Deerfield", 1197, 1322], ["Leipsig", 1351, 973], ["Juneau", 1467, 968], ["Oak Grove", 1437, 988],
  ["Iron Ridge", 1593, 974], ["Allenton", 1732, 953], ["West Bend", 1847, 950], ["Woodland", 1603, 1004],
  ["Cedar Lake", 1768, 1020], ["Hustisford", 1543, 1028], ["Lowell", 1385, 1034], ["Astico", 1296, 1041],
  ["Rubicon", 1646, 1034], ["Slinger", 1772, 1041], ["Jackson", 1859, 1050], ["Hartford", 1704, 1056],
  ["Neosho", 1603, 1064], ["Clyman", 1456, 1063], ["Reeseville", 1365, 1069], ["Richfield", 1839, 1118],
  ["Hubertus", 1819, 1138], ["Richwood", 1410, 1133], ["Ashippun", 1605, 1161], ["Watertown", 1450, 1179],
  ["Menomonee", 1895, 1189], ["Falls", 1895, 1201], ["Ixonia", 1545, 1230], ["Sussex", 1828, 1240],
  ["Oconomowoc", 1617, 1263], ["Hartland", 1727, 1269], ["Hoopers Mill", 1339, 1277], ["Lake Mills", 1316, 1293],
  ["Johnson Creek", 1416, 1298], ["Concord", 1544, 1304], ["Delafield", 1686, 1314], ["Pewaukee", 1830, 1308],
  ["Brookfield", 1888, 1313], ["Highland", 248, 1327], ["Centerville", 211, 1357], ["Barneveld", 600, 1358],
  ["Ridgeway", 531, 1371], ["Fennimore", 46, 1390], ["Montfort", 208, 1402], ["Cobb", 284, 1406],
  ["Edmund", 331, 1406], ["Dodgeville", 430, 1413], ["Stitzer", 70, 1447], ["Annaton", 132, 1462],
  ["Livingston", 210, 1473], ["Linden", 325, 1455], ["Jonesdale", 514, 1474], ["Hollandale", 570, 1497],
  ["Mifflin", 266, 1502], ["Mineral Point", 393, 1513], ["Arthur", 198, 1527], ["Rewey", 236, 1530],
  ["Lancaster", 6, 1525], ["Waldwick", 495, 1547], ["Yellowstone", 545, 1574], ["Ellenboro", 77, 1589],
  ["Fayette", 498, 1618], ["Moscow", 630, 1539], ["Blanchardville", 625, 1562], ["Five Points", 864, 1358],
  ["Fitchburg", 943, 1371], ["Mt Horeb", 715, 1365], ["Verona", 864, 1383], ["McFarland", 1041, 1361],
  ["Cambridge", 1240, 1370], ["Paoli", 871, 1444], ["Oregon", 972, 1447], ["Stoughton", 1093, 1456],
  ["Daleyville", 659, 1458], ["Primrose", 770, 1472], ["Busseyville", 1261, 1475], ["Dunkirk", 1100, 1492],
  ["Rutland", 997, 1494], ["Albion", 1201, 1494], ["Belleville", 860, 1513], ["Brooklyn", 982, 1519],
  ["Cooksville", 1077, 1537], ["Edgerton", 1203, 1537], ["Union", 1032, 1548], ["Dayton", 879, 1546],
  ["New Glarus", 790, 1558], ["Indianford", 1186, 1568], ["Exeter", 827, 1582], ["Evansville", 1034, 1592],
  ["Attica", 902, 1602], ["Milton", 1292, 1597], ["Koshkonong", 1310, 1527], ["Helenville", 1471, 1362],
  ["Sullivan", 1551, 1361], ["Dousman", 1636, 1363], ["Wales", 1700, 1368], ["Waukesha", 1813, 1363],
  ["Jefferson", 1392, 1368], ["Rome", 1521, 1393], ["Ottawa", 1653, 1397], ["New Berlin", 1903, 1397],
  ["Hales", 1923, 1436], ["North Prairie", 1684, 1441], ["Fort Atkinson", 1371, 1444], ["Hebron", 1476, 1448],
  ["Muskego", 1871, 1471], ["Big Bend", 1829, 1487], ["Palmyra", 1554, 1495], ["Eagle", 1635, 1494],
  ["Jericho", 1673, 1495], ["Mukwonago", 1739, 1510], ["Whitewater", 1447, 1539], ["Wind Lake", 1864, 1543],
  ["Tichigan", 1821, 1566], ["La Grange", 1542, 1573], ["East Troy", 1685, 1587], ["Lauderdale", 1569, 1599],
  ["Lakes", 1568, 1611], ["Waterford", 1824, 1609],
];

const parkNames: Place[] = [
  ["Lower", 274, 1162], ["Wisconsin", 274, 1176], ["State Riverway", 275, 1190], ["State Park", 720, 956],
];

const pins: [number, number][] = [[1010, 1117], [953, 1215], [946, 1377]];

const freeway =
  "M1920 1415L1900 1417 1843 1450 1794 1472 1753 1500 1737 1507 1745 1520 1709 1567 1696 1593 1668 1607 1660 1620M905 951L911 967 918 1037 926 1050 954 1087 977 1127 991 1170 1007 1180 1028 1203 1044 1263 1049 1327 1073 1352 1129 1375 1146 1378 1179 1410 1189 1443 1191 1470 1211 1500 1232 1533 1248 1567 1249 1620";

const layerPaint = {
  urban: { fill: "#eeeeee" },
  pale: { fill: "#bfe8e5" },
  minor: { fill: "none", stroke: "#bab9b0", strokeWidth: 1 },
  major: { fill: "none", stroke: "#a8a79e", strokeWidth: 2 },
  parks: { fill: "#115852" },
  lakes: { fill: "#22f0e6" },
  stream: { fill: "none", stroke: "#3fe9e1", strokeWidth: 1 },
  river: { fill: "none", stroke: "#22f0e6", strokeWidth: 4, strokeLinejoin: "round" as const },
};

const layerOrder = ["urban", "pale", "minor", "parks", "lakes", "stream", "major", "river"] as const;

function Terrain() {
  return (
    <>
      {layerOrder.map((layer) => (
        <g key={layer}>
          {tiles.map((t) => (
            <path
              key={`${t.x}-${t.y}`}
              d={t[layer]}
              transform={`translate(${t.x} ${t.y}) scale(${640 / 1568} ${1 / 3})`}
              {...layerPaint[layer]}
            />
          ))}
        </g>
      ))}
      <path d={freeway} fill="none" stroke="#a8a79e" strokeWidth={3} />
    </>
  );
}

function Labels({ halo, top, bottom }: { halo: string; top: number; bottom: number }) {
  const inView = ([, , y]: Place) => y > top - 4 && y < bottom + 4;
  return (
    <g
      textAnchor="middle"
      fill="#1d1f1f"
      stroke={halo}
      strokeWidth={3}
      strokeLinejoin="round"
      paintOrder="stroke"
      fontSize={12}
    >
      {places.filter(inView).map(([name, x, y]) => (
        <text key={`${name}-${x}`} x={x} y={y + 4}>{name}</text>
      ))}
      {parkNames.filter(inView).map(([name, x, y]) => (
        <text key={name} x={x} y={y + 5} fontSize={14} fill="#10423f">{name}</text>
      ))}
    </g>
  );
}

function Pin({ x, y }: { x: number; y: number }) {
  return (
    <g transform={`translate(${x} ${y})`}>
      <path
        d="M0 0C-1 -6 -3 -9 -6 -13C-9 -17 -13 -20 -13 -25A13 13 0 0 1 13 -25C13 -20 9 -17 6 -13C3 -9 1 -6 0 0Z"
        fill="#ea4335"
        stroke="#c5221f"
      />
      <circle cy={-24} r={5} fill="#b31412" />
    </g>
  );
}

function PlusIcon() {
  return (
    <svg width="18" height="18" viewBox="0 0 18 18" fill="#666">
      <path d="M0 7h7V0h4v7h7v4h-7v7H7v-7H0z" />
    </svg>
  );
}

function MinusIcon() {
  return (
    <svg width="18" height="18" viewBox="0 0 18 18" fill="#666">
      <path d="M0 7h18v4H0z" />
    </svg>
  );
}

function FullscreenIcon() {
  return (
    <svg width="18" height="18" viewBox="0 0 18 18" fill="#666">
      <path d="M0 0v6h2V2h4V0H0zm16 0h-4v2h4v4h2V0h-2zm0 16h-4v2h6v-6h-2v4zM2 12H0v6h6v-2H2v-4z" />
    </svg>
  );
}

function PegmanIcon() {
  return (
    <svg width="18" height="32" viewBox="0 0 18 32" stroke="#8a6a1d" strokeWidth="1">
      <path d="M4 12h10l3 11-3 1-1-2v9H9.500v-7h-1v7H5v-9l-1 2-3-1z" fill="#fbb41a" />
      <path d="M5 12h8l-4 5z" fill="#e57a28" stroke="none" />
      <circle cx="9" cy="6.500" r="5" fill="#fbbc22" />
    </svg>
  );
}

function SiteMap() {
  return (
    <MapFrame $height={669} aria-label="Map of certified sites">
      <MapArt viewBox="0 951 1920 669" preserveAspectRatio="xMidYMid slice">
        <Terrain />
        <Labels halo="#f5f4f1" top={951} bottom={1620} />
        <text
          x={960}
          y={1307}
          textAnchor="middle"
          fontSize={15}
          fontWeight={500}
          fill="#1d1f1f"
          stroke="#f5f4f1"
          strokeWidth={3}
          paintOrder="stroke"
        >
          Madison
        </text>
        {pins.map(([x, y]) => (
          <Pin key={x} x={x} y={y} />
        ))}
        <text x={6} y={1632} fontSize={22} fill="#fff" stroke="#aaa" strokeWidth={1} paintOrder="stroke">Google</text>
      </MapArt>
      <TypeSwitch>
        <TypeButton $active>Map</TypeButton>
        <TypeButton>Satellite</TypeButton>
      </TypeSwitch>
      <ControlStack $top={10}>
        <ControlButton aria-label="Toggle fullscreen view"><FullscreenIcon /></ControlButton>
      </ControlStack>
      <ControlStack $top={522}>
        <ControlButton aria-label="Street View"><PegmanIcon /></ControlButton>
      </ControlStack>
      <ControlStack $top={595}>
        <ControlButton aria-label="Zoom in"><PlusIcon /></ControlButton>
        <ControlRule />
        <ControlButton aria-label="Zoom out"><MinusIcon /></ControlButton>
      </ControlStack>
    </MapFrame>
  );
}

function MapStrip() {
  return (
    <MapFrame $height={65} aria-label="Map, continued">
      <MapArt viewBox="0 1520 1920 65" preserveAspectRatio="xMidYMid slice">
        <Terrain />
        <rect x="0" y="1500" width="1920" height="120" fill="#17150f" fillOpacity="0.5" />
        <Labels halo="#9a9996" top={1520} bottom={1585} />
      </MapArt>
      <ControlStack $top={26}>
        <ControlButton aria-label="Zoom in"><PlusIcon /></ControlButton>
      </ControlStack>
    </MapFrame>
  );
}

/* ---------- page ---------- */

const navItems = ["Greater Madison", "Development", "Resources", "What's Happening", "MGE Can Help"];

const pitches = [
  {
    title: "Work Here",
    text: "Madison's diverse constellation of highly ranked educational opportunities produces and attracts the brightest minds. Key industries include BioScience, Information Technology, Finance, Insurance, Real Estate, Manufacturing, Technical Services and more.",
  },
  {
    title: "Live Here",
    text: "While the quality of life in the Greater Madison region is outstanding, the cost of living is close to the U.S. average. You'll enjoy the amenities, recreation and culture of a big city, without the big city price tags.",
  },
  {
    title: "Partner With Us",
    text: "As the electric and natural gas utility for the area, our team goes beyond the pipes and wires to assist both new and existing businesses. We help start-ups and established companies by connecting them to local resources, service providers and investors.",
  },
];

const siteLinks = [
  "Communities",
  "Development",
  "Economic Development Team",
  "Financial Assistance",
  "Start-ups and Existing Businesses",
  "What's Happening",
];

const affiliates = ["DPCED", "Focus on Energy", "WEDC"];

function LinkColumn({ title, links }: { title: string; links: string[] }) {
  return (
    <Column>
      <ColumnTitle>{title}</ColumnTitle>
      <FooterList>
        {links.map((label) => (
          <FooterItem key={label}>
            <FooterLink href="#">{label}</FooterLink>
          </FooterItem>
        ))}
      </FooterList>
    </Column>
  );
}

export default function App() {
  return (
    <>
      <GlobalStyle />
      <Header>
        <Brand href="#">Energize Madison</Brand>
        <Nav>
          {navItems.map((item) => (
            <NavLink key={item} href="#">{item}</NavLink>
          ))}
          <NavTools>
            <IconButton aria-label="Search"><FaSearch /></IconButton>
            <IconButton aria-label="Language"><FaGlobe /></IconButton>
          </NavTools>
        </Nav>
      </Header>

      <Article>
        <PageTitle>Programs, Services and Sites</PageTitle>
        <SectionTitle>Wisconsin certified sites</SectionTitle>
        <Paragraph $gap={20}>
          The Madison area has three locations in the Wisconsin Certified Site program. Properties in{" "}
          <TextLink href="#">Westport</TextLink>, <TextLink href="#">Fitchburg</TextLink> and{" "}
          <TextLink href="#">DeForest</TextLink> have met criteria established by Deloitte Consulting, and these
          sites have key approvals, documentations and assessments already in place.
        </Paragraph>
        <SubTitle $gap={12}>Search for a site</SubTitle>
        <Paragraph $gap={14}>
          <TextLink href="#">PropertyDrive<FaShareSquare /></TextLink> is the premier online commercial real estate
          listing source for Madison, Dane County and the State of Wisconsin. Public users are welcome to search
          their comprehensive database for commercial properties for free, and members have access to many
          additional features.
        </Paragraph>
        <SubTitle $gap={43}>Area Business and Industrial Parks</SubTitle>
        <Paragraph $gap={14}>
          The Madison Region Economic Partnership offers an{" "}
          <TextLink href="#">interactive map<FaShareSquare /></TextLink> of available business and industrial parks
          in the region.
        </Paragraph>
        <Paragraph $gap={32}>
          <TextLink href="#">Locate In Wisconsin<FaShareSquare /></TextLink> is an online tool used to find the
          building or site type that is best suited for your business needs. Users also can find demographic
          information on communities all around the state including wages, housing statistics and consumer
          spending.
        </Paragraph>
      </Article>

      <SiteMap />
      <MapStrip />

      <Band>
        <Columns $template="repeat(3, 1fr)">
          {pitches.map((p) => (
            <Column key={p.title}>
              <ColumnTitle>{p.title}</ColumnTitle>
              <SmallText>{p.text}</SmallText>
            </Column>
          ))}
        </Columns>
      </Band>

      <Footer>
        <Columns $template="1fr 1fr 2fr">
          <LinkColumn title="Energize Madison" links={siteLinks} />
          <LinkColumn title="Affiliates" links={affiliates} />
          <Column>
            <ColumnTitle>CONTACT US</ColumnTitle>
            <SmallText>
              For more information on how the MGE Economic Development Team can work with your business, please{" "}
              <FooterLink href="#">contact us</FooterLink>. And, be sure to follow MGE on LinkedIn for news and
              information on how MGE is a partner in local business and economic growth.
            </SmallText>
          </Column>
        </Columns>
        <Legal>
          <p><LegalMark>©</LegalMark> 2021 Energize Madison, all rights reserved.</p>
          <p><FooterLink href="#">Terms and Conditions</FooterLink></p>
        </Legal>
      </Footer>

      <BackToTop aria-label="Back to top"><FaCaretUp /></BackToTop>
    </>
  );
}
